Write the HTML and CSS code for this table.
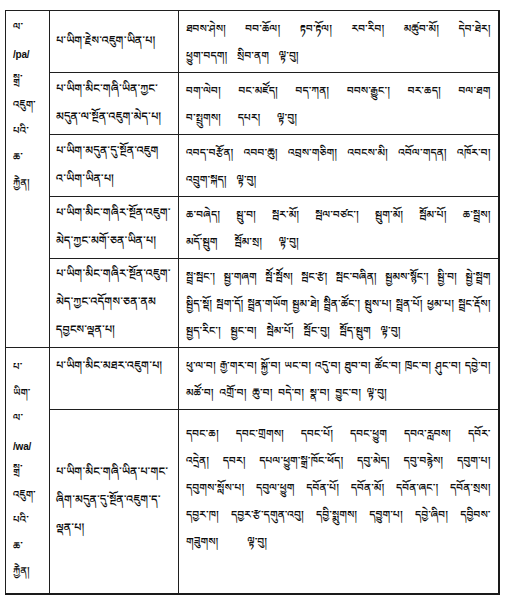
FILE: index.html
```html
<!DOCTYPE html>
<html lang="bo">
<head>
<meta charset="utf-8">
<title>པ་ཡིག</title>
<link rel="stylesheet" href="styles.css">
</head>
<body>
<table class="grid">
  <colgroup>
    <col class="c1">
    <col class="c2">
    <col class="c3">
  </colgroup>
  <tbody>
    <tr class="r1">
      <td class="side side-top" rowspan="5">
        <div>ལ་</div>
        <div class="lat">/pa/</div>
        <div>སྒྲ་</div>
        <div>འཇུག་</div>
        <div>པའི་</div>
        <div>ཆ་</div>
        <div>རྐྱེན།</div>
      </td>
      <td class="cond">པ་ཡིག་རྗེས་འཇུག་ཡིན་པ།</td>
      <td class="ex">
        <div class="jl">ཐབས་ཤེས། བབ་ཆོལ། རྟབ་རྟོལ། རབ་རིབ། མཚུབ་མོ། དེབ་ཐེར།</div>
        <div class="ll">ཕྱུག་བདག། སྲིབ་ནག ལྟ་བུ།</div>
      </td>
    </tr>
    <tr class="r2">
      <td class="cond">པ་ཡིག་མིང་གཞི་ཡིན་ཀྱང་<br>མདུན་ལ་སྔོན་འཇུག་མེད་པ།</td>
      <td class="ex">
        <div class="jl">བག་ལེབ། བང་མཛོད། བད་ཀན། བབས་རྒྱུང་། བར་ཆད། བལ་ཐག</div>
        <div class="ll wide">བ་སྤྲུགས། དཔར། ལྟ་བུ།</div>
      </td>
    </tr>
    <tr class="r3">
      <td class="cond">པ་ཡིག་མདུན་དུ་སྔོན་འཇུག<br>འ་ཡིག་ཡིན་པ།</td>
      <td class="ex">
        <div class="jl">འབད་བརྩོན། འབབ་ཆུ། འབྲས་གཅིག། འབངས་མི། འབོལ་གདན། འཁོར་བ།</div>
        <div class="ll">འབྲུག་སྐད། ལྟ་བུ།</div>
      </td>
    </tr>
    <tr class="r4">
      <td class="cond">པ་ཡིག་མིང་གཞིར་སྔོན་འཇུག་<br>མེད་ཀྱང་མགོ་ཅན་ཡིན་པ།</td>
      <td class="ex">
        <div class="jl">ཆ་བཞེད། སྦུ་བ། སྦར་མོ། སྦལ་བཙང་། སྦུག་མོ། སྦོམ་པོ། ཆ་སྦྲས།</div>
        <div class="ll wide">མདོ་སྦུག སྦོམ་སྲ། ལྟ་བུ།</div>
      </td>
    </tr>
    <tr class="r5">
      <td class="cond">པ་ཡིག་མིང་གཞིར་སྔོན་འཇུག་<br>མེད་ཀྱང་འདོགས་ཅན་ནམ<br>དབྱངས་ལྡན་པ།</td>
      <td class="ex">
        <div class="jl">སྦྲ་སྦང་། སྦྱ་གཞག སྦོ་སྦོས། སྦང་རྩ། སྦང་བཞིན། སྦྱམས་སྙོང་། སྦྱི་བ། སྦྱེ་སྦྲག</div>
        <div class="jl">སྦྱིད་སྡོ། སྦག་དོ། སྦྲན་གཡོག སྦྱམ་ཐེ། སྦྲིན་ཚོང་། སྦུས་པ། སྦྲན་པོ། ཕྱམ་པ། སྦྲང་རྡོས།</div>
        <div class="ll">སྦྱད་རིང་། སྦྱང་བ། སྦེམ་པོ། སྦོང་བུ། སྦོད་སྦུག ལྟ་བུ།</div>
      </td>
    </tr>
    <tr class="r6">
      <td class="side side-bot" rowspan="2">
        <div>པ་</div>
        <div>ཡིག་</div>
        <div>ལ་</div>
        <div class="lat">/wa/</div>
        <div>སྒྲ་</div>
        <div>འཇུག་</div>
        <div>པའི་</div>
        <div>ཆ་</div>
        <div>རྐྱེན།</div>
      </td>
      <td class="cond top">པ་ཡིག་མིང་མཐར་འཇུག་པ།</td>
      <td class="ex">
        <div class="jl">ཕུ་ལ་བ། རྒྱ་གར་བ། སྐྱོ་བ། ཡང་བ། འདུ་བ། ཐུབ་བ། ཚོང་བ། ཁྲང་བ། ཤུང་བ། དབྱེ་བ།</div>
        <div class="ll tight">མཚོ་བ། འགྲོ་བ། ཆུ་བ། བདེ་བ། སྣ་བ། བྱུང་བ། ལྟ་བུ།</div>
      </td>
    </tr>
    <tr class="r7">
      <td class="cond">པ་ཡིག་མིང་གཞི་ཡིན་པ་གང་<br>ཞིག་མདུན་དུ་སྔོན་འཇུག་ད་<br>ལྡན་པ།</td>
      <td class="ex ex-tall">
        <div class="jl">དབང་ཆ། དབང་གྲགས། དབང་པོ། དབང་ཕྱུག དབའ་རླབས། དབོར་</div>
        <div class="jl">འདྲེན། དབར། དཔལ་ཕྱུག་སྒྲ་ཁོང་ཕོད། དབུ་མེད། དབུ་བརྙེས། དབུག་པ།</div>
        <div class="jl">དབུགས་སློས་པ། དབུལ་ཕྱུག དབོན་པོ། དབོན་མོ། དབོན་ཞང་། དབོན་སྲས།</div>
        <div class="jl">དབྱར་ཁ། དབྱར་རྩ་དགུན་འབུ། དབྱི་སྨུགས། དབྱུག་པ། དབྱེ་ཞིབ། དབྱིབས་</div>
        <div class="ll widest">གཟུགས། ལྟ་བུ།</div>
      </td>
    </tr>
  </tbody>
</table>
</body>
</html>
```

FILE: styles.css
```css
html, body {
  margin: 0;
  padding: 0;
  background: #ffffff;
}

body {
  padding: 10px 0 0 5px;
  font-family: "Noto Serif Tibetan", "Noto Sans Tibetan", "Jomolhari", "Tibetan Machine Uni", "DejaVu Sans", sans-serif;
  font-size: 11px;
  font-weight: 600;
  color: #0d0d0d;
}

.grid {
  border-collapse: collapse;
  table-layout: fixed;
  width: 493px;
  border-right: 2px solid #1a1a1a;
  border-bottom: 2px solid #1a1a1a;
}

.c1 { width: 44px; }
.c2 { width: 129px; }
.c3 { width: 320px; }

.grid td {
  border: 1.5px solid #1f1f1f;
  padding: 0;
  overflow: hidden;
}

.r1 { height: 61px; }
.r2 { height: 61px; }
.r3 { height: 61px; }
.r4 { height: 62px; }
.r5 { height: 88px; }
.r6 { height: 62px; }
.r7 { height: 184px; }

.side {
  vertical-align: top;
  padding-left: 7px !important;
  font-size: 10px;
  line-height: 26px;
}

.side-top { padding-top: 5px !important; }
.side-bot { padding-top: 9px !important; line-height: 25.5px; }

.lat {
  font-family: "Liberation Sans", Arial, sans-serif;
  font-weight: bold;
  font-size: 10px;
  letter-spacing: -0.2px;
}

.cond {
  vertical-align: middle;
  padding: 4px 2px 0 6px !important;
  line-height: 28px;
  white-space: nowrap;
}

.cond.top {
  vertical-align: top;
  padding-top: 7px !important;
}

.ex {
  vertical-align: top;
  padding: 7px 7px 0 7px !important;
  font-size: 10.5px;
  line-height: 27px;
}

.ex-tall {
  padding-top: 13px !important;
  line-height: 27px;
}

.jl {
  text-align: justify;
  text-align-last: justify;
  white-space: nowrap;
}

.ll {
  text-align: left;
  word-spacing: 7px;
  white-space: nowrap;
}

.ll.wide { word-spacing: 14px; }
.ll.tight { word-spacing: 3px; }
.ll.widest { word-spacing: 26px; }
```
